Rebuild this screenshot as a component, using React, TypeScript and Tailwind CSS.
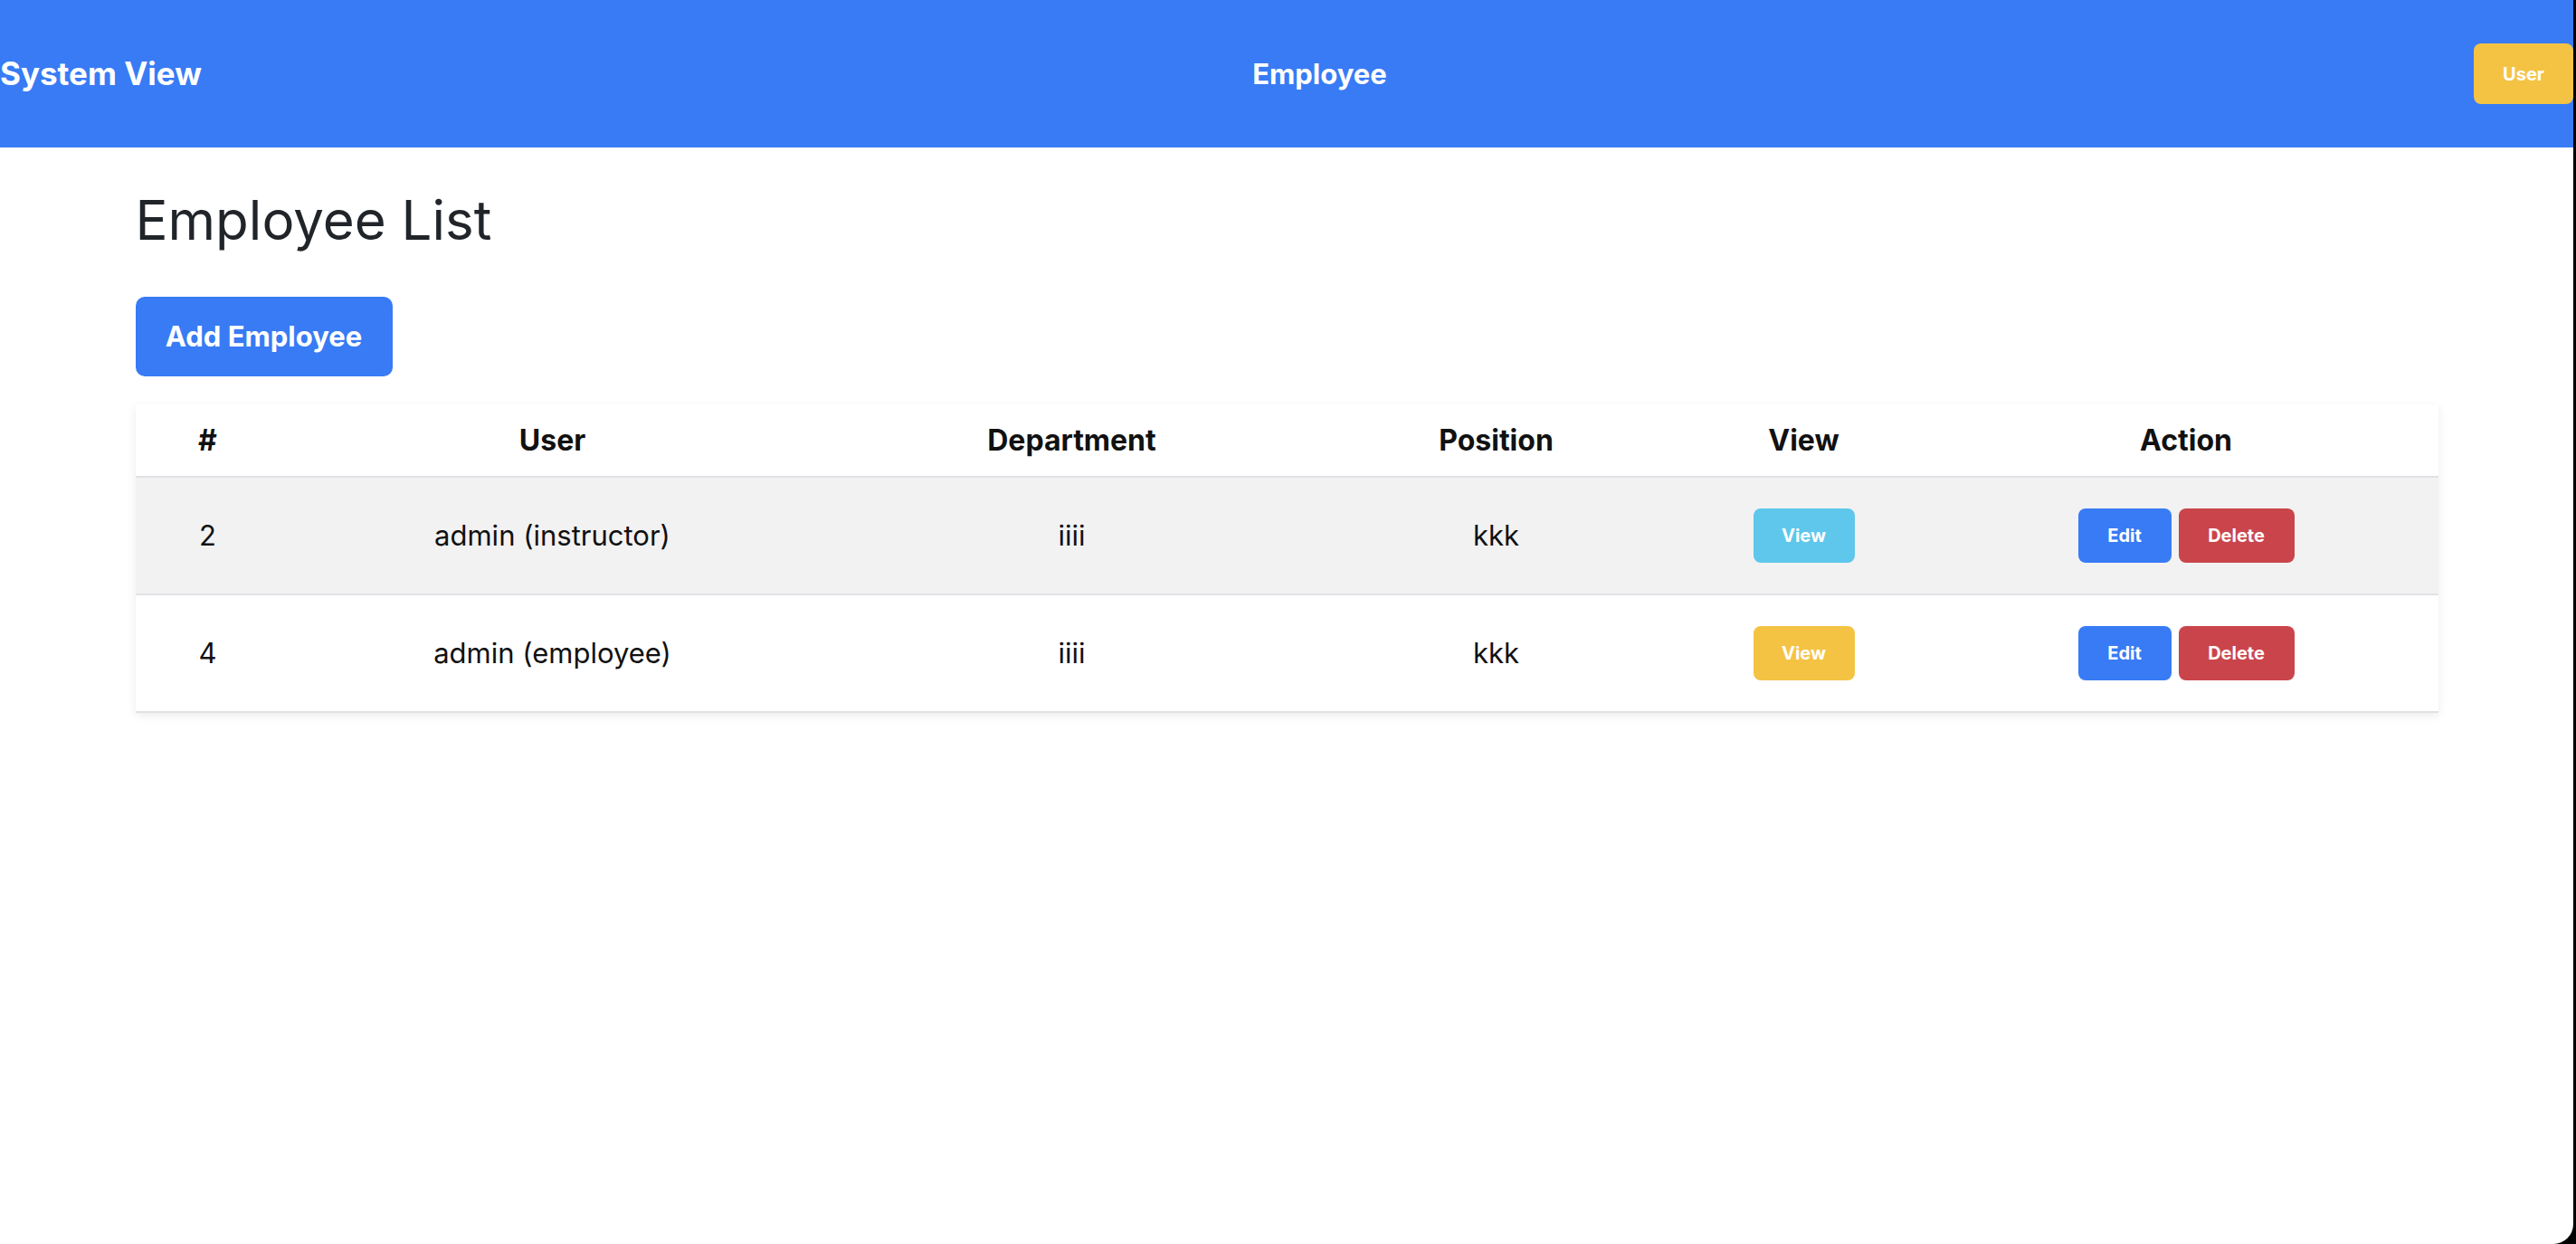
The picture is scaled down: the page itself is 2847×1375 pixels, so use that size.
import React from "react";

type Employee = {
    id: number;
    user: string;
    department: string;
    position: string;
    viewTone: "info" | "warning";
};

const employees: Employee[] = [
    { id: 2, user: "admin (instructor)", department: "iiii", position: "kkk", viewTone: "info" },
    { id: 4, user: "admin (employee)", department: "iiii", position: "kkk", viewTone: "warning" },
];

const cols = "grid grid-cols-[160px_602px_546px_392px_288px_1fr]";

const App = () => {
    return (
        <div className="min-h-[1375px] w-full bg-black font-['Inter',sans-serif]">
            <div className="w-[2844px] h-[1375px] bg-white rounded-br-[22px] overflow-hidden">

                {/* top bar */}
                <header className="h-[163px] bg-[#387bf5] flex items-center justify-between">
                    <span className="text-white font-bold text-[35px] leading-none">System View</span>
                    <span className="text-white font-bold text-[31px] leading-none mr-[40px]">Employee</span>
                    <button className="h-[67px] px-8 rounded-[8px] bg-[#f5c344] text-white font-bold text-[20px]">User</button>
                </header>

                <main className="w-[2545px] mx-auto">
                    <h1 className="mt-[44px] text-[60px] leading-[72px] font-normal text-[#212529]">Employee List</h1>

                    <button className="mt-[49px] w-[284px] h-[88px] rounded-[10px] bg-[#387bf5] text-white font-bold text-[31px]">
                        Add Employee
                    </button>

                    <div className="mt-[31px] bg-white shadow-[0_3px_10px_rgba(0,0,0,0.08)]">
                        <div className={`${cols} h-[81px] items-center border-b-2 border-[#e0e1e5] text-[32px] font-bold text-[#111] text-center`}>
                            <div>#</div>
                            <div>User</div>
                            <div>Department</div>
                            <div>Position</div>
                            <div>View</div>
                            <div>Action</div>
                        </div>

                        {employees.map((emp, i) => (
                            <div
                                key={emp.id}
                                className={`${cols} h-[130px] items-center border-b-2 border-[#e0e1e5] text-[31px] text-[#111] text-center ${i % 2 === 0 ? "bg-[#f2f2f2]" : "bg-white"}`}
                            >
                                <div>{emp.id}</div>
                                <div>{emp.user}</div>
                                <div>{emp.department}</div>
                                <div>{emp.position}</div>
                                <div className="flex justify-center">
                                    <button
                                        className={`w-[112px] h-[60px] rounded-[8px] text-white font-bold text-[20px] ${emp.viewTone === "info" ? "bg-[#5ec7eb]" : "bg-[#f5c344]"}`}
                                    >
                                        View
                                    </button>
                                </div>
                                <div className="flex justify-center gap-2">
                                    <button className="w-[103px] h-[60px] rounded-[8px] bg-[#387bf5] text-white font-bold text-[20px]">Edit</button>
                                    <button className="w-[128px] h-[60px] rounded-[8px] bg-[#ca454b] text-white font-bold text-[20px]">Delete</button>
                                </div>
                            </div>
                        ))}
                    </div>
                </main>

            </div>
        </div>
    );
};

export default App;
